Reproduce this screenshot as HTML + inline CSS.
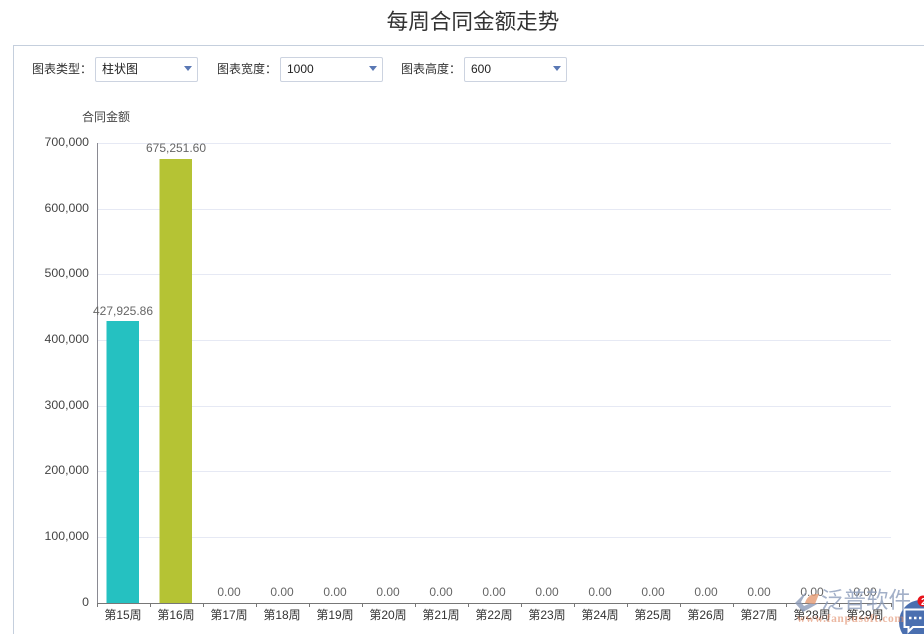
<!DOCTYPE html>
<html lang="zh">
<head>
<meta charset="utf-8">
<style>
html,body{margin:0;padding:0;background:#fff;width:924px;height:634px;overflow:hidden;}
#w{position:relative;width:924px;height:634px;overflow:hidden;font-family:"Liberation Sans","Noto Sans CJK SC",sans-serif;}
svg{position:absolute;left:0;top:0;}
.sel{position:absolute;top:57px;height:23px;border:1px solid #ccd3e0;border-radius:2px;background:#fff;font-size:12px;line-height:23px;color:#222;padding-left:6px;box-sizing:content-box;}
.sel i{position:absolute;right:5px;top:8px;width:0;height:0;border-left:4.500px solid transparent;border-right:4.500px solid transparent;border-top:5px solid #5a78b4;}
.lab{position:absolute;top:61px;font-size:12px;line-height:16px;color:#333;white-space:nowrap;}
.title{position:absolute;left:0;top:7px;width:946px;text-align:center;font-size:21.600px;line-height:30px;color:#333;}
.box{position:absolute;left:13px;top:45px;width:911px;height:589px;border-left:1px solid #c5cfdd;border-top:1px solid #c5cfdd;box-sizing:border-box;}
</style>
</head>
<body>
<div id="w">
<div class="title">每周合同金额走势</div>
<div class="box"></div>
<div class="lab" style="left:32px">图表类型：</div>
<div class="sel" style="left:95px;width:95px">柱状图<i></i></div>
<div class="lab" style="left:217px">图表宽度：</div>
<div class="sel" style="left:280px;width:95px">1000<i></i></div>
<div class="lab" style="left:401px">图表高度：</div>
<div class="sel" style="left:464px;width:95px">600<i></i></div>
<svg width="924" height="634" viewBox="0 0 924 634" font-family="'Liberation Sans','Noto Sans CJK SC',sans-serif" font-size="12">
<text x="82" y="121" fill="#444">合同金额</text>
<g stroke="#e6e9f4" stroke-width="1">
<path d="M97 143.500H891M97 209.500H891M97 274.500H891M97 340.500H891M97 406.500H891M97 471.500H891M97 537.500H891"/>
</g>
<g fill="#444" text-anchor="end" font-size="12.300">
<text x="89" y="146">700,000</text>
<text x="89" y="212">600,000</text>
<text x="89" y="277">500,000</text>
<text x="89" y="343">400,000</text>
<text x="89" y="409">300,000</text>
<text x="89" y="474">200,000</text>
<text x="89" y="540">100,000</text>
<text x="89" y="606">0</text>
</g>
<rect x="106.500" y="321" width="32.500" height="282" fill="#25c1c1"/>
<rect x="159.500" y="159" width="32.500" height="444" fill="#b5c334"/>
<path d="M97.500 143V603" stroke="#8a8a92" fill="none"/>
<path d="M97 603.500H891" stroke="#777" fill="none"/>
<path d="M97.500 603v4M150.500 603v4M203.500 603v4M256.500 603v4M309.500 603v4M362.500 603v4M415.500 603v4M468.500 603v4M521.500 603v4M574.500 603v4M627.500 603v4M680.500 603v4M733.500 603v4M786.500 603v4M839.500 603v4M891.500 603v4" stroke="#777" fill="none"/>
<g fill="#333" text-anchor="middle">
<text x="123" y="619">第15周</text><text x="176" y="619">第16周</text><text x="229" y="619">第17周</text><text x="282" y="619">第18周</text><text x="335" y="619">第19周</text><text x="388" y="619">第20周</text><text x="441" y="619">第21周</text><text x="494" y="619">第22周</text><text x="547" y="619">第23周</text><text x="600" y="619">第24周</text><text x="653" y="619">第25周</text><text x="706" y="619">第26周</text><text x="759" y="619">第27周</text><text x="812" y="619">第28周</text><text x="865" y="619">第29周</text>
</g>
<g fill="#666" text-anchor="middle">
<text x="123" y="315">427,925.86</text><text x="176" y="152">675,251.60</text>
<text x="229" y="596">0.00</text><text x="282" y="596">0.00</text><text x="335" y="596">0.00</text><text x="388" y="596">0.00</text><text x="441" y="596">0.00</text><text x="494" y="596">0.00</text><text x="547" y="596">0.00</text><text x="600" y="596">0.00</text><text x="653" y="596">0.00</text><text x="706" y="596">0.00</text><text x="759" y="596">0.00</text><text x="812" y="596">0.00</text><text x="865" y="596">0.00</text>
</g>
<g opacity="0.8">
<path d="M807 591 L795 603 L803 612 L819 603 L811 603 L804 606 L801 602 Z" fill="#8c9ab8"/>
<path d="M805 603 Q808 593 819 594 L815 604 Z" fill="#e59a72"/>
<text x="821" y="608" font-size="22.500" fill="#8d9dbb">泛普软件</text>
</g>
<circle cx="921" cy="622" r="22" fill="#4a6fb0"/>
<path d="M904.500 609.500H926V627H913L908.500 631.500V627H904.500Z" fill="none" stroke="#fff" stroke-width="2"/>
<path d="M909 618h2.500M914 618h2.500M919 618h2.500" stroke="#fff" stroke-width="2.500"/>
<circle cx="923" cy="601" r="5.500" fill="#e8141c"/>
<text x="921" y="605" font-size="10" font-weight="bold" fill="#fff">2</text>
<text x="797" y="622" font-size="11.500" font-weight="bold" font-family="'Liberation Serif',serif" textLength="107" lengthAdjust="spacing" fill="#e08a66" opacity="0.6">www.fanpusoft.com</text>
</svg>
</div>
</body>
</html>
